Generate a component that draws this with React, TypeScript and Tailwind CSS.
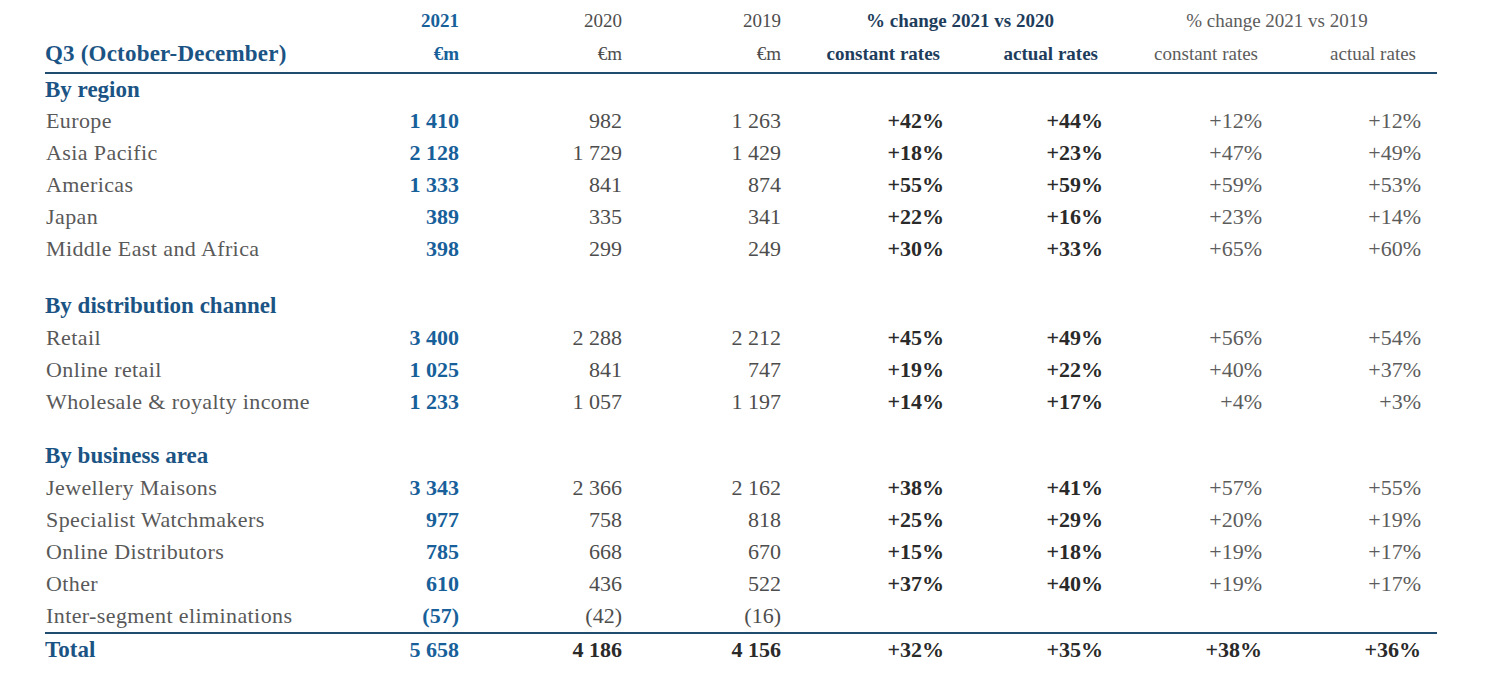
const cols = "grid grid-cols-[255px_159px_163px_159px_163px_159px_159px_159px] pr-[16px]";

type Row = { label: string; v: string[] };

const sections: { title: string; rows: Row[] }[] = [
  {
    title: "By region",
    rows: [
      { label: "Europe", v: ["1 410", "982", "1 263", "+42%", "+44%", "+12%", "+12%"] },
      { label: "Asia Pacific", v: ["2 128", "1 729", "1 429", "+18%", "+23%", "+47%", "+49%"] },
      { label: "Americas", v: ["1 333", "841", "874", "+55%", "+59%", "+59%", "+53%"] },
      { label: "Japan", v: ["389", "335", "341", "+22%", "+16%", "+23%", "+14%"] },
      { label: "Middle East and Africa", v: ["398", "299", "249", "+30%", "+33%", "+65%", "+60%"] },
    ],
  },
  {
    title: "By distribution channel",
    rows: [
      { label: "Retail", v: ["3 400", "2 288", "2 212", "+45%", "+49%", "+56%", "+54%"] },
      { label: "Online retail", v: ["1 025", "841", "747", "+19%", "+22%", "+40%", "+37%"] },
      { label: "Wholesale & royalty income", v: ["1 233", "1 057", "1 197", "+14%", "+17%", "+4%", "+3%"] },
    ],
  },
  {
    title: "By business area",
    rows: [
      { label: "Jewellery Maisons", v: ["3 343", "2 366", "2 162", "+38%", "+41%", "+57%", "+55%"] },
      { label: "Specialist Watchmakers", v: ["977", "758", "818", "+25%", "+29%", "+20%", "+19%"] },
      { label: "Online Distributors", v: ["785", "668", "670", "+15%", "+18%", "+19%", "+17%"] },
      { label: "Other", v: ["610", "436", "522", "+37%", "+40%", "+19%", "+17%"] },
      { label: "Inter-segment eliminations", v: ["(57)", "(42)", "(16)", "", "", "", ""] },
    ],
  },
];

// colour for each value column
const valueClass = [
  "font-bold text-[#17609a]",
  "text-[#4d4d4d]",
  "text-[#4d4d4d]",
  "font-bold text-[#2a2a2a]",
  "font-bold text-[#2a2a2a]",
  "text-[#5c5c5c]",
  "text-[#5c5c5c]",
];

function DataRow({ row }: { row: Row }) {
  return (
    <div className={`${cols} h-[32px] items-center`}>
      <div className="whitespace-nowrap pl-[1px] tracking-[0.4px] text-[#595959]">{row.label}</div>
      {row.v.map((v, i) => (
        <div key={i} className={`whitespace-nowrap text-right ${valueClass[i]}`}>
          {v}
        </div>
      ))}
    </div>
  );
}

export default function App() {
  return (
    <div className="min-h-[678px] w-[1500px] bg-white font-['Liberation_Serif','Times_New_Roman',serif] text-[22px] leading-none">
      <div className="ml-[45px] w-[1392px]">
        {/* header */}
        <div className={`${cols} h-[40px] items-center whitespace-nowrap text-[19px]`}>
          <div />
          <div className="text-right font-bold text-[#17609a]">2021</div>
          <div className="text-right text-[#4d4d4d]">2020</div>
          <div className="text-right text-[#4d4d4d]">2019</div>
          <div className="col-span-2 pl-[36px] text-center font-bold text-[#1e3d5c]">% change 2021 vs 2020</div>
          <div className="col-span-2 pl-[30px] text-center text-[#5c5c5c]">% change 2021 vs 2019</div>
        </div>
        <div className={`${cols} h-[32px] items-center whitespace-nowrap pb-[6px] text-[19px]`}>
          <div className="text-[23px] font-bold tracking-[0.2px] text-[#1b5484]">Q3 (October-December)</div>
          <div className="text-right font-bold text-[#17609a]">€m</div>
          <div className="text-right text-[#4d4d4d]">€m</div>
          <div className="text-right text-[#4d4d4d]">€m</div>
          <div className="pr-[4px] text-right font-bold text-[#1e3d5c]">constant rates</div>
          <div className="pr-[5px] text-right font-bold text-[#1e3d5c]">actual rates</div>
          <div className="pr-[4px] text-right text-[#5c5c5c]">constant rates</div>
          <div className="pr-[5px] text-right text-[#5c5c5c]">actual rates</div>
        </div>
        <div className="h-[2px] bg-[#1f4d70]" />

        {sections.map((s, si) => (
          <div key={s.title} className={si === 1 ? "pt-[23px]" : si === 2 ? "pt-[20px]" : ""}>
            <div className={`${si === 0 ? "h-[31px]" : "h-[34px]"} flex items-center whitespace-nowrap text-[23px] font-bold text-[#1b5484]`}>
              {s.title}
            </div>
            {s.rows.map((r) => (
              <DataRow key={r.label} row={r} />
            ))}
          </div>
        ))}

        <div className="h-[2px] bg-[#1f4d70]" />
        {/* total */}
        <div className={`${cols} h-[31px] items-center whitespace-nowrap font-bold`}>
          <div className="text-[23px] text-[#1b5484]">Total</div>
          <div className="text-right text-[#17609a]">5 658</div>
          <div className="text-right text-[#2a2a2a]">4 186</div>
          <div className="text-right text-[#2a2a2a]">4 156</div>
          <div className="text-right text-[#2a2a2a]">+32%</div>
          <div className="text-right text-[#2a2a2a]">+35%</div>
          <div className="text-right text-[#2a2a2a]">+38%</div>
          <div className="text-right text-[#2a2a2a]">+36%</div>
        </div>
      </div>
    </div>
  );
}
